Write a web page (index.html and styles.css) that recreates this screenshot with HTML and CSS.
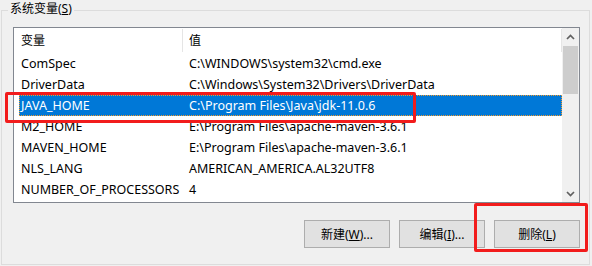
FILE: index.html
```html
<!DOCTYPE html>
<html lang="zh-CN">
<head>
    <meta charset="UTF-8">
    <title>系统变量</title>
    <link rel="stylesheet" href="styles.css">
</head>
<body>
    <div class="page">
        <!-- System variables group -->
        <div class="group">
            <div class="legend">系统变量(<u>S</u>)</div>

            <div class="listbox">
                <div class="list-main">
                    <div class="list-head">
                        <div class="head-cell">变量</div>
                        <div class="head-cell">值</div>
                    </div>
                    <div class="rows">
                        <div class="row"><span>ComSpec</span><span>C:\WINDOWS\system32\cmd.exe</span></div>
                        <div class="row"><span>DriverData</span><span>C:\Windows\System32\Drivers\DriverData</span></div>
                        <div class="row selected"><span>JAVA_HOME</span><span>C:\Program Files\Java\jdk-11.0.6</span></div>
                        <div class="row"><span>M2_HOME</span><span>E:\Program Files\apache-maven-3.6.1</span></div>
                        <div class="row"><span>MAVEN_HOME</span><span>E:\Program Files\apache-maven-3.6.1</span></div>
                        <div class="row"><span>NLS_LANG</span><span>AMERICAN_AMERICA.AL32UTF8</span></div>
                        <div class="row"><span>NUMBER_OF_PROCESSORS</span><span>4</span></div>
                    </div>
                </div>
                <div class="scrollbar">
                    <div class="arrow">
                        <svg width="9" height="6" viewBox="0 0 9 6"><polyline points="1,5 4.5,1.5 8,5" /></svg>
                    </div>
                    <div class="thumb"></div>
                    <div class="track"></div>
                    <div class="arrow">
                        <svg width="9" height="6" viewBox="0 0 9 6"><polyline points="1,1 4.5,4.5 8,1" /></svg>
                    </div>
                </div>
            </div>

            <div class="buttons">
                <button class="btn">新建(<u>W</u>)...</button>
                <button class="btn">编辑(<u>I</u>)...</button>
                <button class="btn">删除(<u>L</u>)</button>
            </div>
        </div>

        <!-- annotation marks -->
        <div class="mark mark-row"></div>
        <div class="mark mark-btn"></div>
    </div>
</body>
</html>
```

FILE: styles.css
```css
/* Basic Reset */
* {
    box-sizing: border-box;
    margin: 0;
    padding: 0;
}

body {
    font-family: "Noto Sans", "Noto Sans CJK SC", sans-serif;
    font-size: 12px;
    color: #000;
    background-color: #f0f0f0;
}

.page {
    position: relative;
    width: 592px;
    height: 266px;
    padding-top: 10px;
}

/* Group box */
.group {
    margin: 0 2px 0 1px;
    height: 255px;
    border: 1px solid #dcdcdc;
}

.legend {
    display: block;
    width: max-content;
    margin: -10px 0 0 6px;
    padding: 0 2px;
    line-height: 16px;
    background-color: #f0f0f0;
}

/* List view */
.listbox {
    display: flex;
    height: 176px;
    margin: 10px 9px 0 11px;
    border: 1px solid #828790;
    background-color: #fff;
}

.list-main {
    flex: 1;
}

.list-head {
    display: grid;
    grid-template-columns: 169px 1fr;
    height: 25px;
}

.head-cell {
    line-height: 25px;
    padding-left: 7px;
    position: relative;
}

.head-cell::after {
    content: "";
    position: absolute;
    right: 0;
    top: 1px;
    bottom: 1px;
    width: 1px;
    background-color: #e5e5e5;
}

.head-cell + .head-cell {
    padding-left: 6px;
}

.rows {
    margin-left: 5px;
    font-size: 12.5px;
}

.row {
    display: grid;
    grid-template-columns: 163px 1fr;
    height: 21px;
    line-height: 21px;
    white-space: nowrap;
}

.row span:first-child {
    padding-left: 2px;
}

.row span:last-child {
    padding-left: 7px;
}

.row.selected {
    background-color: #0078d7;
    color: #fff;
    outline: 1px dotted #f39a2c;
    outline-offset: -1px;
}

/* Scroll bar */
.scrollbar {
    width: 17px;
    display: flex;
    flex-direction: column;
    background-color: #f0f0f0;
}

.arrow {
    height: 17px;
    display: flex;
    align-items: center;
    justify-content: center;
}

.arrow svg polyline {
    fill: none;
    stroke: #606060;
    stroke-width: 1.7;
}

.thumb {
    height: 48px;
    margin: 1px 1px 0 1px;
    background-color: #cdcdcd;
}

.track {
    flex: 1;
}

/* Buttons */
.buttons {
    display: flex;
    justify-content: flex-end;
    gap: 9px;
    margin-top: 17px;
    padding-right: 9px;
}

.btn {
    width: 86px;
    height: 28px;
    font-family: inherit;
    font-size: 12px;
    color: #000;
    background-color: #e1e1e1;
    border: 1px solid #adadad;
}

/* Red annotation boxes */
.mark {
    position: absolute;
    border: 3px solid #f21c1c;
    border-radius: 2px;
}

.mark-row {
    left: 5px;
    top: 92px;
    width: 411px;
    height: 31px;
}

.mark-btn {
    left: 474px;
    top: 203px;
    width: 114px;
    height: 49px;
}
```
